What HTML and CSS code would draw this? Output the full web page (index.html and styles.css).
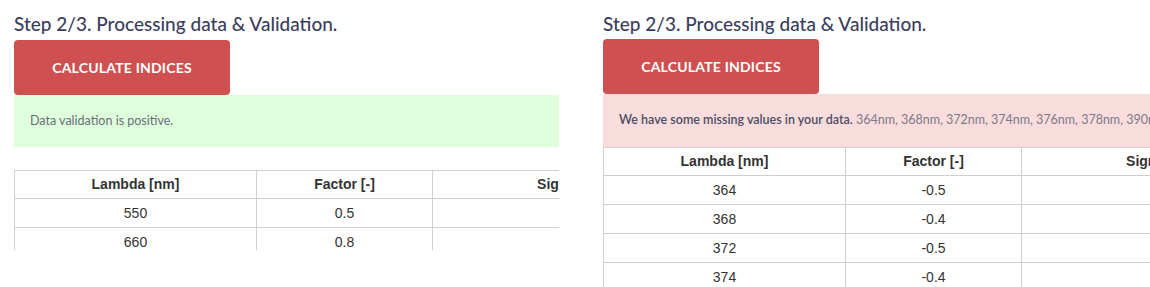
FILE: index.html
```html
<!DOCTYPE html>
<html lang="en">
<head>
    <meta charset="UTF-8">
    <title>Processing data &amp; Validation</title>
    <link rel="stylesheet" href="styles.css">
</head>
<body>

<div class="wrap">
    <!-- valid data -->
    <div class="panel panel-ok">
        <h2>Step 2/3. Processing data &amp; Validation.</h2>
        <button class="btn">CALCULATE INDICES</button>
        <div class="alert alert-ok">Data validation is positive.</div>
        <table class="data">
            <tr><th class="c1">Lambda [nm]</th><th class="c2">Factor [-]</th><th class="c3">Signal [-]</th></tr>
            <tr><td>550</td><td>0.5</td><td></td></tr>
            <tr><td>660</td><td>0.8</td><td></td></tr>
            <tr><td>710</td><td>0.2</td><td></td></tr>
        </table>
    </div>

    <!-- missing values -->
    <div class="panel panel-err">
        <h2>Step 2/3. Processing data &amp; Validation.</h2>
        <button class="btn">CALCULATE INDICES</button>
        <div class="alert alert-err"><strong>We have some missing values in your data.</strong> 364nm, 368nm, 372nm, 374nm, 376nm, 378nm, 390nm, 394nm, 398nm</div>
        <table class="data flush">
            <tr><th class="c1">Lambda [nm]</th><th class="c2">Factor [-]</th><th class="c3">Signal [-]</th></tr>
            <tr><td>364</td><td>-0.5</td><td></td></tr>
            <tr><td>368</td><td>-0.4</td><td></td></tr>
            <tr><td>372</td><td>-0.5</td><td></td></tr>
            <tr><td>374</td><td>-0.4</td><td></td></tr>
            <tr><td>376</td><td>-0.3</td><td></td></tr>
        </table>
    </div>
</div>

</body>
</html>
```

FILE: styles.css
```css
body {
    margin: 0;
    background: #fff;
    font-family: Lato, "Open Sans", sans-serif;
    overflow: hidden;
}
.wrap {
    display: flex;
    gap: 44px;
    padding-left: 14px;
}
.panel {
    overflow: hidden;
    padding-top: 13px;
    flex-shrink: 0;
}
.panel-ok {
    width: 545px;
    height: 237px; /* table is cut at 250 */
}
.panel-err {
    width: 547px;
    height: 274px;
}
h2 {
    margin: 0 0 5px 0;
    font-size: 19px;
    line-height: 22px;
    font-weight: 500;
    color: #3c3e5e;
    white-space: nowrap;
}
.panel-err h2 {
    margin-bottom: 4px;
}
.btn {
    display: block;
    width: 216px;
    height: 55px;
    border: none;
    border-radius: 4px;
    background-color: #cf5050;
    color: #fff;
    font-family: Lato, sans-serif;
    font-weight: bold;
    font-size: 14px;
    letter-spacing: 0.2px;
    cursor: pointer;
}
.alert {
    height: 52px;
    box-sizing: border-box;
    padding: 18px 16px;
    font-size: 12.5px;
    line-height: 16px;
    white-space: nowrap;
    overflow: hidden;
}
.alert-ok {
    background-color: #defedc;
    color: #6b6e7a;
}
.alert-err {
    height: 54px;
    background-color: #f9dcdc;
    color: #7a7b88;
}
.alert-err strong {
    font-weight: 600;
    color: #4c4e66;
}
.data {
    width: 684px;
    border-collapse: collapse;
    margin-top: 23px;
    font-family: Arial, "Liberation Sans", sans-serif;
    font-size: 14px;
    color: #333;
    table-layout: fixed;
}
.data.flush {
    margin-top: -1px;
}
.data th, .data td {
    border: 1px solid #d0d0d0;
    padding: 6px 8px;
    height: 16px;
    line-height: 16px;
    text-align: center;
}
.data th {
    font-weight: bold;
    padding: 5px 8px 6px;
}
.c1 { width: 225px; }
.c2 { width: 159px; }
.c3 { width: 252px; }
```
